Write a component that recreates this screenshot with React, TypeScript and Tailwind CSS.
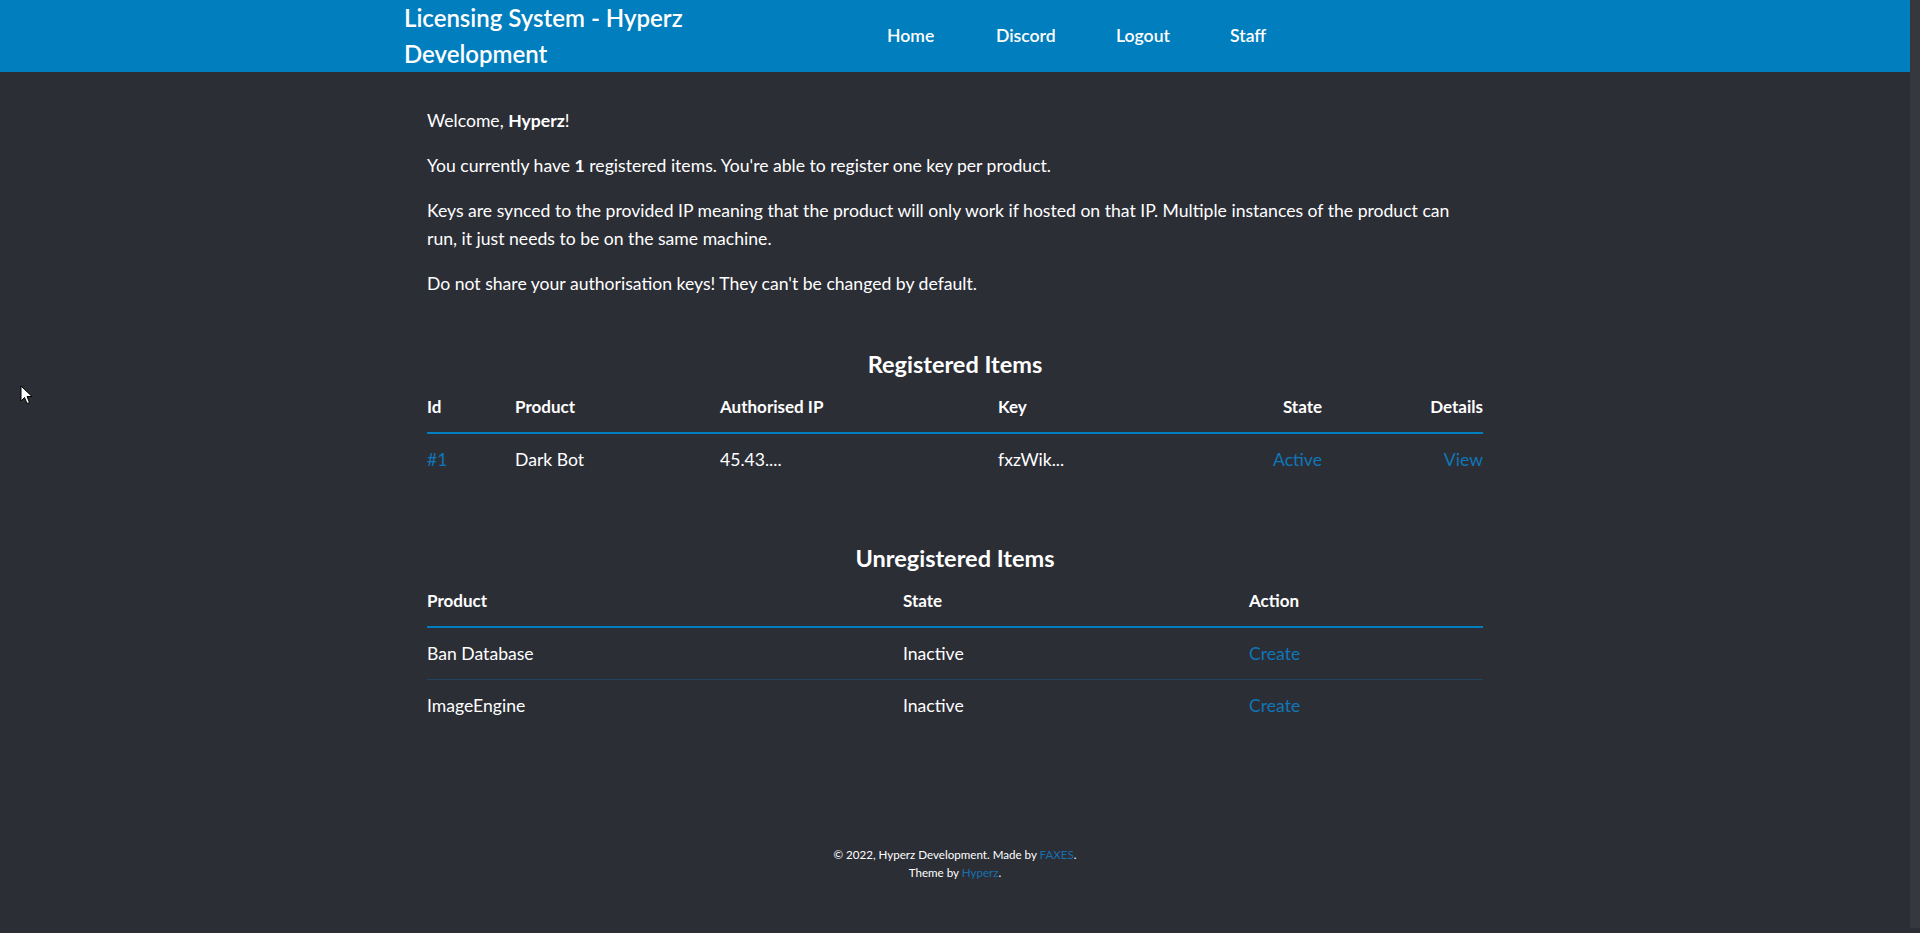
import React from "react";

const font = { fontFamily: "Lato, 'Open Sans', sans-serif" };

export default function App() {
  const regCols = "grid grid-cols-[88px_205px_278px_200px_124px_161px]";
  const unregCols = "grid grid-cols-[476px_346px_234px]";
  return (
    <div className="flex w-[1920px] h-[933px] overflow-hidden bg-[#2c2e36] text-white" style={font}>
      <div className="relative flex w-[1910px] flex-col">
        <header className="flex h-[72px] shrink-0 bg-[#017ebe]">
          <div className="ml-[404px] w-[483px] text-[24px] font-semibold leading-[36px]">
            Licensing System - Hyperz
            <br />
            Development
          </div>
          <nav className="flex items-center text-[17.6px] font-semibold">
            <a className="w-[109px]">Home</a>
            <a className="w-[120px]">Discord</a>
            <a className="w-[114px]">Logout</a>
            <a>Staff</a>
          </nav>
        </header>

        <main className="mx-auto w-[1056px] pt-[35px] text-[17.6px] leading-[28px]">
          <p className="mb-[17px]">
            Welcome, <b>Hyperz</b>!
          </p>
          <p className="mb-[17px]">
            You currently have <b>1</b> registered items. You're able to register one key per product.
          </p>
          <p className="mb-[17px]">
            Keys are synced to the provided IP meaning that the product will only work if hosted on that IP. Multiple
            instances of the product can run, it just needs to be on the same machine.
          </p>
          <p>Do not share your authorisation keys! They can't be changed by default.</p>

          <h2 className="mt-[53px] text-center text-[23.5px] font-bold leading-[26px]">Registered Items</h2>
          <div className="mt-[4px]">
            <div className={`${regCols} h-[53px] items-center border-b-2 border-[#017ebe] text-[17px] font-bold`}>
              <div>Id</div>
              <div>Product</div>
              <div>Authorised IP</div>
              <div>Key</div>
              <div className="text-right">State</div>
              <div className="text-right">Details</div>
            </div>
            <div className={`${regCols} h-[51px] items-center`}>
              <div className="text-[#0f76b8]">#1</div>
              <div>Dark Bot</div>
              <div>45.43....</div>
              <div>fxzWik...</div>
              <div className="text-right text-[#0f76b8]">Active</div>
              <div className="text-right text-[#0f76b8]">View</div>
            </div>
          </div>

          <h2 className="mt-[60px] text-center text-[23.5px] font-bold leading-[26px]">Unregistered Items</h2>
          <div className="mt-[4px]">
            <div className={`${unregCols} h-[53px] items-center border-b-2 border-[#017ebe] text-[17px] font-bold`}>
              <div>Product</div>
              <div>State</div>
              <div>Action</div>
            </div>
            <div className={`${unregCols} h-[52px] items-center border-b border-[#1d4560]`}>
              <div>Ban Database</div>
              <div>Inactive</div>
              <div className="text-[#0f76b8]">Create</div>
            </div>
            <div className={`${unregCols} h-[51px] items-center`}>
              <div>ImageEngine</div>
              <div>Inactive</div>
              <div className="text-[#0f76b8]">Create</div>
            </div>
          </div>

          <footer className="mt-[115px] text-center text-[11.6px] leading-[18px]">
            <div>
              © 2022, Hyperz Development. Made by <span className="text-[#1670b0]">FAXES</span>.
            </div>
            <div>
              Theme by <span className="text-[#1670b0]">Hyperz</span>.
            </div>
          </footer>
        </main>

        <svg className="absolute left-[20px] top-[385px]" width="13" height="20" viewBox="0 0 13 20">
          <path d="M1 1 L1 16 L4.5 12.5 L7 18.5 L9.5 17.5 L7 11.5 L12 11.5 Z" fill="#fff" stroke="#000" strokeWidth="1" />
        </svg>
      </div>
      <div className="h-[928px] w-[10px] bg-[#36383e]" />
    </div>
  );
}
